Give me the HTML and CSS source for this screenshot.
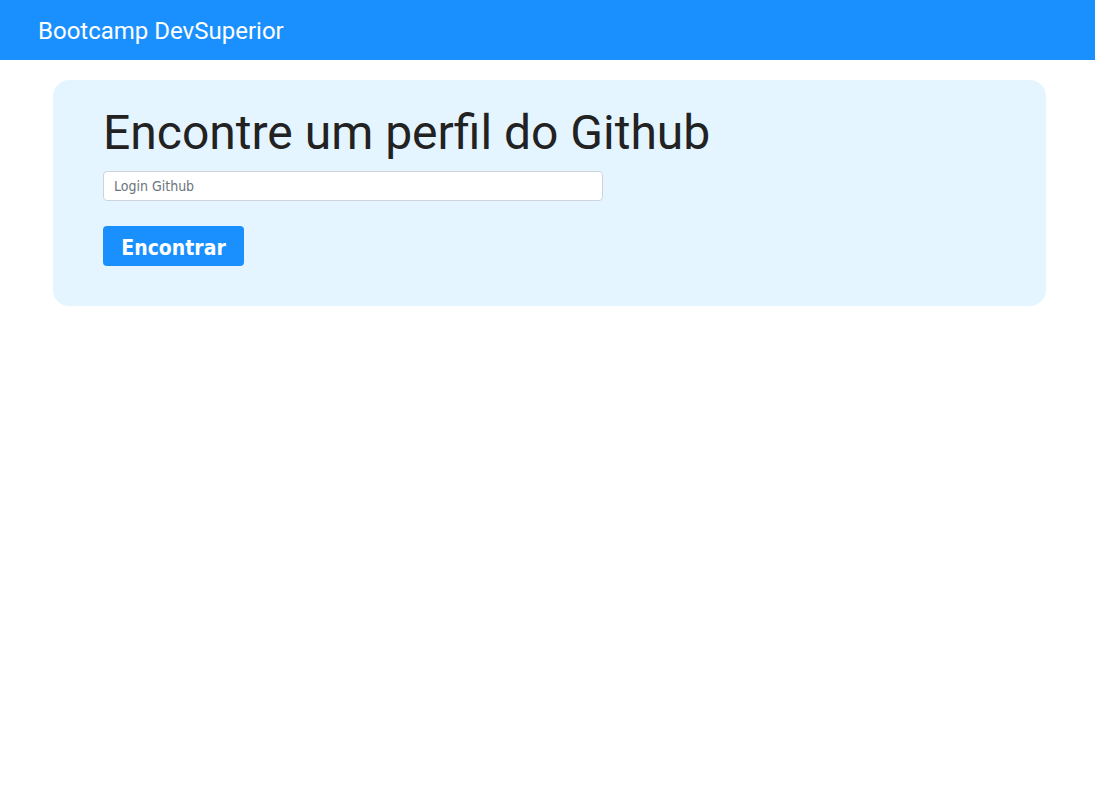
FILE: index.html
```html
<!DOCTYPE html>
<html lang="pt-BR">
<head>
<meta charset="utf-8">
<title>Bootcamp DevSuperior</title>
<link rel="stylesheet" href="styles.css">
</head>
<body>
<header class="navbar">
  <span class="brand">Bootcamp DevSuperior</span>
</header>
<main class="content">
  <section class="search-card">
    <h1 class="search-title">Encontre um perfil do Github</h1>
    <input class="search-input" type="text" placeholder="Login Github">
    <button class="search-button" type="button">Encontrar</button>
  </section>
</main>
</body>
</html>
```
FILE: styles.css
```css
html, body {
  margin: 0;
  padding: 0;
  background: #ffffff;
}
body {
  font-family: Roboto, "Liberation Sans", sans-serif;
}
.navbar {
  height: 60px;
  background: #1a90ff;
  display: flex;
  align-items: center;
  padding-left: 38px;
  box-sizing: border-box;
}
.brand {
  color: #ffffff;
  font-size: 24px;
  line-height: 1;
  padding-top: 2px;
}
.content {
  padding: 20px 49px 0 53px;
}
.search-card {
  background: #e4f5ff;
  border-radius: 16px;
  padding: 24px 50px 40px 50px;
  display: flex;
  flex-direction: column;
  align-items: flex-start;
}
.search-title {
  margin: 0 0 10px 0;
  font-size: 48px;
  font-weight: 400;
  line-height: 57px;
  color: #222222;
}
.search-input {
  width: 500px;
  height: 30px;
  box-sizing: border-box;
  border: 1px solid #cfd4da;
  border-radius: 4px;
  padding: 0 10px;
  font-family: "DejaVu Sans Condensed", "DejaVu Sans", sans-serif;
  font-stretch: condensed;
  font-size: 14px;
  color: #333;
  background: #fff;
}
.search-input::placeholder {
  color: #6c757d;
}
.search-button {
  margin-top: 25px;
  width: 141px;
  height: 40px;
  border: none;
  border-radius: 4px;
  background: #1a90ff;
  color: #ffffff;
  font-family: "DejaVu Sans Condensed", "DejaVu Sans", sans-serif;
  font-stretch: condensed;
  font-weight: bold;
  font-size: 21px;
  padding: 4px 0 0 0;
}
```
